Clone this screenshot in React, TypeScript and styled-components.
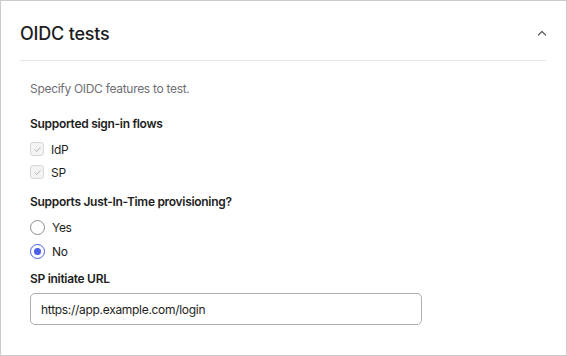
import React from "react";
import styled, { createGlobalStyle } from "styled-components";

const Global = createGlobalStyle`
  html, body { margin: 0; padding: 0; background: #ffffff; }
  body { font-family: Inter, "Noto Sans", sans-serif; color: #1d1d21; }
  * { box-sizing: border-box; }
`;

const Card = styled.section`
  width: 567px;
  height: 356px;
  border: 1px solid #cbcbcb;
  background: #fff;
  padding: 0 20px 0 19px;
`;

const Header = styled.header`
  height: 60px;
  display: flex;
  align-items: center;
  justify-content: space-between;
  border-bottom: 1px solid #e4e4e6;
  padding-top: 5px;
`;

const Title = styled.h2`
  margin: 0;
  font-size: 18px;
  font-weight: 500;
  letter-spacing: -0.2px;
  color: #1d1d21;
`;

const Toggle = styled.button`
  border: 0;
  background: none;
  padding: 0;
  width: 14px;
  height: 14px;
  display: flex;
  align-items: center;
  justify-content: center;
  margin-right: -3px;
  margin-top: -1px;
  color: #6b6b70;
`;

const Body = styled.div`
  padding: 19px 0 0 10px;
  display: flex;
  flex-direction: column;
`;

const Description = styled.p`
  margin: 0;
  font-size: 12px;
  line-height: 18px;
  letter-spacing: -0.3px;
  color: #6e6e73;
`;

const Legend = styled.div<{ $top: number }>`
  margin-top: ${(p) => p.$top}px;
  font-size: 12px;
  line-height: 18px;
  letter-spacing: -0.3px;
  font-weight: 600;
  color: #1d1d21;
`;

const OptionList = styled.div<{ $gap: number }>`
  display: flex;
  flex-direction: column;
  gap: ${(p) => p.$gap}px;
  margin-top: 5px;
`;

const Option = styled.label`
  display: flex;
  align-items: center;
  gap: 7px;
  height: 22px;
  font-size: 12px;
  letter-spacing: -0.3px;
  color: #1d1d21;
`;

const CheckBox = styled.span`
  width: 14px;
  height: 14px;
  border-radius: 3px;
  border: 1px solid #d6d6d8;
  background: #f3f3f4;
  display: flex;
  align-items: center;
  justify-content: center;
`;

const Radio = styled.span<{ $checked?: boolean }>`
  width: 15px;
  height: 15px;
  border-radius: 50%;
  border: 1px solid ${(p) => (p.$checked ? "#4a5ee8" : "#8e8e93")};
  background: #fff;
  display: flex;
  align-items: center;
  justify-content: center;
  &::after {
    content: "";
    width: 7px;
    height: 7px;
    border-radius: 50%;
    background: ${(p) => (p.$checked ? "#4a5ee8" : "transparent")};
  }
`;

const Input = styled.input`
  margin-top: 5px;
  width: 392px;
  height: 32px;
  border: 1px solid #aeaeb2;
  border-radius: 5px;
  padding: 0 10px;
  font-family: Inter, "Noto Sans", sans-serif;
  font-size: 12px;
  letter-spacing: -0.3px;
  color: #1d1d21;
  outline: none;
`;

const Check = () => (
  <svg width="9" height="9" viewBox="0 0 10 10" fill="none">
    <path d="M2 5.2 L4.2 7.2 L8 2.8" stroke="#b4b4b8" strokeWidth="1.1" strokeLinecap="round" strokeLinejoin="round" />
  </svg>
);

export default function App() {
  return (
    <>
      <Global />
      <Card>
        <Header>
          <Title>OIDC tests</Title>
          <Toggle aria-label="Collapse">
            <svg width="10" height="6" viewBox="0 0 10 6" fill="none">
              <path d="M1.5 5 L5 1.5 L8.5 5" stroke="#5a5a60" strokeWidth="1.2" strokeLinecap="round" strokeLinejoin="round" />
            </svg>
          </Toggle>
        </Header>
        <Body>
          <Description>Specify OIDC features to test.</Description>
          <Legend $top={17}>Supported sign-in flows</Legend>
          <OptionList $gap={1}>
            <Option><CheckBox><Check /></CheckBox>IdP</Option>
            <Option><CheckBox><Check /></CheckBox>SP</Option>
          </OptionList>
          <Legend $top={10}>Supports Just-In-Time provisioning?</Legend>
          <OptionList $gap={2}>
            <Option><Radio />Yes</Option>
            <Option><Radio $checked />No</Option>
          </OptionList>
          <Legend $top={8}>SP initiate URL</Legend>
          <Input defaultValue="https://app.example.com/login" />
        </Body>
      </Card>
    </>
  );
}
